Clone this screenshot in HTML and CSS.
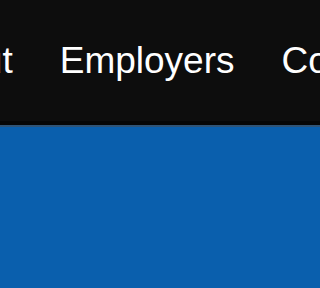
FILE: index.html
```html
<!DOCTYPE html>
<html>
<head>
<meta charset="utf-8">
<link rel="stylesheet" href="styles.css">
</head>
<body>
<header class="site-header">
  <nav class="main-nav">
    <a class="nav-link" href="#">About</a>
    <a class="nav-link" href="#">Employers</a>
    <a class="nav-link" href="#">Contact</a>
  </nav>
</header>
<main class="hero"></main>
</body>
</html>
```
FILE: styles.css
```css
html, body {
  margin: 0;
  padding: 0;
  height: 100%;
  overflow: hidden;
}
body {
  background: #0a5fad;
  font-family: "Liberation Sans", Arial, sans-serif;
}
.site-header {
  background: #0d0d0d;
  padding: 40px 0 40px 5px;
  border-bottom: 4px solid #060606;
  box-shadow: 0 2px 0 #2f5477;
  overflow: hidden;
}
.main-nav {
  display: flex;
  justify-content: center;
  gap: 47px;
  white-space: nowrap;
}
.nav-link {
  flex: none;
  color: #ffffff;
  text-decoration: none;
  font-size: 37px;
  line-height: 41px;
}
.hero {
  height: 160px;
}
```
